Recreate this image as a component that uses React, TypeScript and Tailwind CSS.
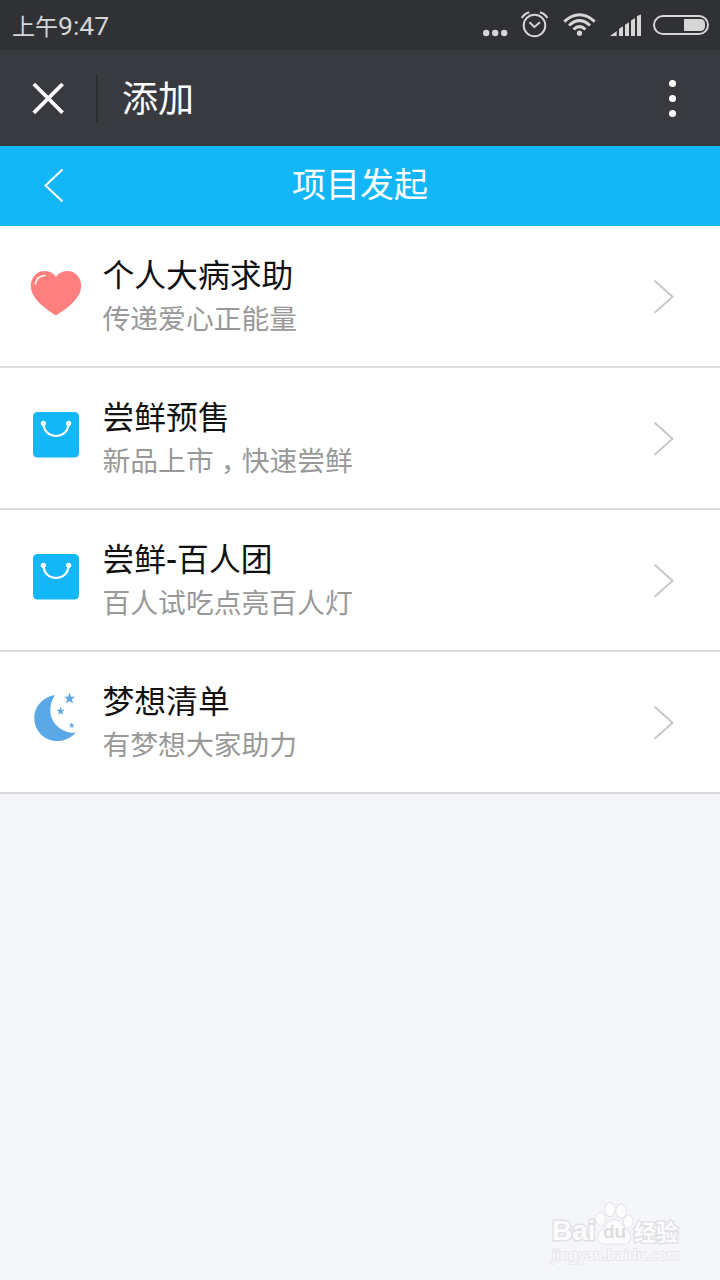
import type { ReactNode } from "react"

interface Project {
  title: ReactNode
  desc: ReactNode
  icon: ReactNode
}

const HeartIcon = () => (
  <svg width="52" height="46" viewBox="0 0 52 46" fill="none">
    <path
      d="M26 45.6C19 41 0.8 30 0.8 15.8C0.8 7.3 7 1 14.5 1C19.5 1 23.6 3.3 26 7C28.4 3.3 32.5 1 37.5 1C45 1 51.2 7.3 51.2 15.8C51.2 30 33 41 26 45.6Z"
      fill="#ff7f7f"
    />
    <path d="M5.2 14.5C6 9.5 9.5 5.8 15.5 5.3" stroke="#fff" strokeWidth="1.6" />
  </svg>
)

const BagIcon = () => (
  <svg width="46" height="46" viewBox="0 0 46 46" fill="none">
    <rect width="46" height="45.5" rx="4.5" fill="#13b7f7" />
    <path d="M10.3 12C11.3 19.5 16 24 23 24C30 24 34.7 19.5 35.7 12" stroke="#fff" strokeWidth="2.2" />
    <circle cx="10.3" cy="11.3" r="2.6" fill="#fff" />
    <circle cx="35.7" cy="11.3" r="2.6" fill="#fff" />
  </svg>
)

const MoonIcon = () => (
  <svg className="mb-1" width="44" height="50" viewBox="0 0 44 50" fill="#5aa9e6">
    <path d="M21 3.2C9.5 4.5 0.3 14 0.3 26.2C0.3 38.8 10.5 49 23 49C30.5 49 37.3 45.8 41.5 40.7C28 41.5 16.5 31.5 16.3 18.5C16.2 12.5 18 7 21 3.2Z" />
    <path d="M35.5 0.5L36.9 4.7H41.2L37.7 7.3L39.1 11.5L35.5 8.9L31.9 11.5L33.3 7.3L29.8 4.7H34.1Z" />
    <path d="M26.6 14.8L27.6 17.8H30.8L28.2 19.7L29.2 22.8L26.6 20.9L24 22.8L25 19.7L22.4 17.8H25.6Z" />
    <path d="M37.7 30.2L38.4 32.5H40.8L38.9 33.9L39.6 36.2L37.7 34.8L35.8 36.2L36.5 33.9L34.6 32.5H37Z" />
  </svg>
)

const projects: Project[] = [
  { title: "个人大病求助", desc: "传递爱心正能量", icon: <HeartIcon /> },
  {
    title: "尝鲜预售",
    desc: (
      <>
        新品上市
        <span className="inline-block w-7 text-center [font-feature-settings:'halt']">，</span>
        快速尝鲜
      </>
    ),
    icon: <BagIcon />,
  },
  {
    title: (
      <>
        尝鲜<span className="inline-block w-[11px] text-center font-medium">-</span>百人团
      </>
    ),
    desc: "百人试吃点亮百人灯",
    icon: <BagIcon />,
  },
  { title: "梦想清单", desc: "有梦想大家助力", icon: <MoonIcon /> },
]

function StatusBar() {
  return (
    <div className="flex h-[50px] items-center justify-between bg-[#303135] pl-3 text-[#d6d6d6]">
      <div className="flex items-baseline pt-[3px] leading-none">
        <span className="text-[23px]">上午</span>
        <span className="text-[26.5px]">9:47</span>
      </div>
      <svg width="240" height="50" viewBox="480 0 240 50" fill="none" stroke="currentColor">
        <g fill="currentColor" stroke="none">
          <circle cx="486.2" cy="33" r="3.2" />
          <circle cx="495.2" cy="33" r="3.2" />
          <circle cx="504.2" cy="33" r="3.2" />
        </g>
        {/* alarm */}
        <circle cx="534.5" cy="25.5" r="10.8" strokeWidth="2" />
        <path d="M529.5 22.3L534.3 27L540 22.3" strokeWidth="2" />
        <path d="M521.8 18Q524.3 13.7 529.3 12.3M547.4 18Q544.9 13.7 539.9 12.3" strokeWidth="2.2" />
        {/* wifi */}
        <path d="M564.3 21.6Q579.5 8 594.7 21.6" strokeWidth="3" />
        <path d="M569 25.5Q579.5 15.8 590 25.5" strokeWidth="3" />
        <path d="M573.5 29.5Q579.5 23.7 585.5 29.5" strokeWidth="3" />
        <circle cx="579.5" cy="33.2" r="2.6" fill="currentColor" stroke="none" />
        {/* signal */}
        <path
          d="M610 36L616.7 31V36ZM619 28.8L623 26.2V36H619ZM625 24.8L629 22.2V36H625ZM631 20.5L635 18V36H631ZM637 16L641 14.5V36H637Z"
          fill="currentColor"
          stroke="none"
        />
        {/* battery */}
        <rect x="654" y="16" width="54" height="18" rx="9" strokeWidth="2" />
        <path d="M684 19H700.5A4.5 4.5 0 0 1 705 23.5V26.5A4.5 4.5 0 0 1 700.5 31H684Z" fill="currentColor" stroke="none" />
      </svg>
    </div>
  )
}

function TopBar() {
  return (
    <div className="flex h-24 items-center bg-[#393a3f] text-white">
      <svg className="ml-8" width="32" height="32" viewBox="0 0 32 32" stroke="currentColor" strokeWidth="3.8">
        <path d="M1.8 2L30.6 30.8M30.6 2L1.8 30.8" />
      </svg>
      <div className="ml-8 h-12 w-0.5 bg-[#2e2f33]" />
      <h1 className="ml-6 pt-1 text-4xl leading-none">添加</h1>
      <div className="mr-[44.5px] ml-auto flex flex-col gap-2">
        <span className="size-[7px] rounded-full bg-white" />
        <span className="size-[7px] rounded-full bg-white" />
        <span className="size-[7px] rounded-full bg-white" />
      </div>
    </div>
  )
}

function TitleBar() {
  return (
    <div className="grid h-20 grid-cols-[120px_1fr_120px] items-center bg-[#13b7f7] text-white">
      <svg className="ml-[44px]" width="20" height="34" viewBox="0 0 20 34" fill="none" stroke="currentColor" strokeWidth="2">
        <path d="M18.5 0.4L1.5 16.5L18.5 32.6" />
      </svg>
      <h2 className="pb-0.5 text-center text-[34px] leading-none">项目发起</h2>
    </div>
  )
}

function ProjectRow({ title, desc, icon }: Project) {
  return (
    <li className="flex h-[142px] border-b-2 border-[#dcdcdc] bg-white">
      <div className="flex w-[102.5px] items-center justify-center pb-1.5 pl-[9.5px]">{icon}</div>
      <div className="flex-1 pt-[29px]">
        <p className="text-[31.8px] leading-[42px] text-[#111]">{title}</p>
        <p className="text-[27.8px] leading-[45px] text-[#999]">{desc}</p>
      </div>
      <svg className="mt-[54px] mr-[46px]" width="20" height="34" viewBox="0 0 20 34" fill="none" stroke="#c8c8c8" strokeWidth="2">
        <path d="M0.6 0.6L18.5 16.7L0.6 32.8" />
      </svg>
    </li>
  )
}

function Watermark() {
  return (
    <div className="mt-auto mr-10 mb-[17px] flex w-[128px] flex-col self-end font-['Liberation_Sans'] text-[#fcfcfd] [paint-order:stroke_fill] [-webkit-text-stroke:3px_#e0e1e5]">
      <div className="flex h-[44px] items-end font-bold">
        <span className="w-[43px] text-[28px] leading-[28px]">Bai</span>
        <div className="relative h-[44px] w-[39px]">
          <svg width="39" height="44" viewBox="0 0 39 44" fill="#fcfcfd" stroke="#dcdde1" strokeWidth="1.4">
            <ellipse cx="5.5" cy="18" rx="4.5" ry="6.2" />
            <ellipse cx="14.8" cy="8.5" rx="4.9" ry="6.8" />
            <ellipse cx="26" cy="10" rx="4.9" ry="6.8" />
            <ellipse cx="33.3" cy="20.5" rx="4.5" ry="6.2" />
            <path d="M19 19C12 19 12 25 7.5 28.5C0.5 34 3 42.8 9.5 42.8H29C36.5 42.8 37.5 33.5 31 28.5C26.5 25 26 19 19 19Z" />
          </svg>
          <span className="absolute bottom-[4px] left-[8px] text-[19px] leading-none text-[#dcdde1] [-webkit-text-stroke:0]">du</span>
        </div>
        <span className="font-['Noto_Sans_CJK_SC'] text-[22px] leading-[30px]">经验</span>
      </div>
      <span className="font-['Noto_Sans'] text-[14.8px] leading-[18px] [-webkit-text-stroke:2px_#e6e7ea]">jingyan.baidu.com</span>
    </div>
  )
}

export default function App() {
  return (
    <div className="flex h-[1280px] w-[720px] flex-col overflow-hidden bg-[#f4f6fa] font-[Roboto,'Noto_Sans_CJK_SC',sans-serif]">
      <StatusBar />
      <TopBar />
      <TitleBar />
      <ul>
        {projects.map((project, index) => (
          <ProjectRow key={index} {...project} />
        ))}
      </ul>
      <Watermark />
    </div>
  )
}
